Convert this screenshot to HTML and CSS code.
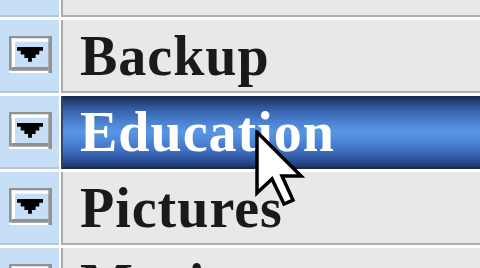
FILE: index.html
```html
<!DOCTYPE html>
<html>
<head>
<meta charset="utf-8">
<link rel="stylesheet" href="styles.css">
</head>
<body>
<div class="list">
  <div class="row">
    <div class="side"></div>
    <div class="cell"></div>
  </div>
  <div class="row">
    <div class="side"><svg class="drop" width="43" height="37" viewBox="0 0 43 37"><rect x="0" y="0" width="43" height="2.5" fill="#929292"/><rect x="0" y="0" width="2.7" height="34.7" fill="#929292"/><rect x="39.3" y="0" width="3.7" height="37" fill="#929292"/><rect x="0" y="34.7" width="39.3" height="2.3" fill="#ffffff"/><rect x="2.7" y="2.5" width="36.6" height="3.2" fill="#ffffff"/><rect x="2.7" y="2.5" width="3.3" height="29" fill="#ffffff"/><rect x="2.7" y="31" width="36.6" height="3.7" fill="#929292"/><path d="M8 11H34V14.7H30.3V18.4H26.6V22.1H22.9V25.8H19.1V22.1H15.4V18.4H11.7V14.7H8Z" fill="#000"/></svg></div>
    <div class="cell">Backup</div>
  </div>
  <div class="row">
    <div class="side"><svg class="drop" width="43" height="37" viewBox="0 0 43 37"><rect x="0" y="0" width="43" height="2.5" fill="#929292"/><rect x="0" y="0" width="2.7" height="34.7" fill="#929292"/><rect x="39.3" y="0" width="3.7" height="37" fill="#929292"/><rect x="0" y="34.7" width="39.3" height="2.3" fill="#ffffff"/><rect x="2.7" y="2.5" width="36.6" height="3.2" fill="#ffffff"/><rect x="2.7" y="2.5" width="3.3" height="29" fill="#ffffff"/><rect x="2.7" y="31" width="36.6" height="3.7" fill="#929292"/><path d="M8 11H34V14.7H30.3V18.4H26.6V22.1H22.9V25.8H19.1V22.1H15.4V18.4H11.7V14.7H8Z" fill="#000"/></svg></div>
    <div class="cell selected">Education</div>
  </div>
  <div class="row">
    <div class="side"><svg class="drop" width="43" height="37" viewBox="0 0 43 37"><rect x="0" y="0" width="43" height="2.5" fill="#929292"/><rect x="0" y="0" width="2.7" height="34.7" fill="#929292"/><rect x="39.3" y="0" width="3.7" height="37" fill="#929292"/><rect x="0" y="34.7" width="39.3" height="2.3" fill="#ffffff"/><rect x="2.7" y="2.5" width="36.6" height="3.2" fill="#ffffff"/><rect x="2.7" y="2.5" width="3.3" height="29" fill="#ffffff"/><rect x="2.7" y="31" width="36.6" height="3.7" fill="#929292"/><path d="M8 11H34V14.7H30.3V18.4H26.6V22.1H22.9V25.8H19.1V22.1H15.4V18.4H11.7V14.7H8Z" fill="#000"/></svg></div>
    <div class="cell">Pictures</div>
  </div>
  <div class="row">
    <div class="side"><svg class="drop" width="43" height="37" viewBox="0 0 43 37"><rect x="0" y="0" width="43" height="2.5" fill="#929292"/><rect x="0" y="0" width="2.7" height="34.7" fill="#929292"/><rect x="39.3" y="0" width="3.7" height="37" fill="#929292"/><rect x="0" y="34.7" width="39.3" height="2.3" fill="#ffffff"/><rect x="2.7" y="2.5" width="36.6" height="3.2" fill="#ffffff"/><rect x="2.7" y="2.5" width="3.3" height="29" fill="#ffffff"/><rect x="2.7" y="31" width="36.6" height="3.7" fill="#929292"/><path d="M8 11H34V14.7H30.3V18.4H26.6V22.1H22.9V25.8H19.1V22.1H15.4V18.4H11.7V14.7H8Z" fill="#000"/></svg></div>
    <div class="cell">Music</div>
  </div>
</div>
<svg class="cursor" width="50" height="80" viewBox="-2 -2 50 80"><path d="M0 0L0 61L15 47L27 72L36 68L25 44L44 44Z" fill="#fff" stroke="#000" stroke-width="3.5" stroke-linejoin="miter"/></svg>
</body>
</html>
```
FILE: styles.css
```css
html, body {
  margin: 0;
  padding: 0;
  background: #ffffff;
  overflow: hidden;
  width: 480px;
  height: 268px;
}
body {
  position: relative;
  font-family: "Liberation Serif", "Times New Roman", serif;
}
.list {
  display: flex;
  flex-direction: column;
  margin-top: -59px;
}
.row {
  display: flex;
  gap: 2px;
  padding-top: 3px;
  background: #ffffff;
}
.side {
  box-sizing: border-box;
  width: 59px;
  height: 73px;
  flex: none;
  background: #c6def6;
  border-bottom: 2px solid #b6c6d6;
  padding: 16px 0 0 9px;
}
.drop {
  display: block;
}
.cell {
  flex: 1;
  box-sizing: border-box;
  height: 73px;
  padding-top: 8px;
  padding-left: 17px;
  background: #e8e8e8;
  border-left: 2px solid #aaaaaa;
  border-bottom: 2px solid #b0b0b0;
  font-size: 56px;
  font-weight: bold;
  letter-spacing: 1px;
  line-height: 56px;
  color: #1a1a1a;
  white-space: nowrap;
  overflow: hidden;
}
.cell.selected {
  border-left: 2px solid #2a4478;
  border-bottom: 2px solid #1c2a48;
  color: #ffffff;
  background: linear-gradient(to bottom,
    #17264a 0%,
    #26427c 8%,
    #3a66b0 22%,
    #4c84d4 38%,
    #5896e2 50%,
    #4f88d8 62%,
    #3e6ec0 78%,
    #2c5298 90%,
    #1f3666 100%);
}
.cursor {
  position: absolute;
  left: 255px;
  top: 130px;
}
```
